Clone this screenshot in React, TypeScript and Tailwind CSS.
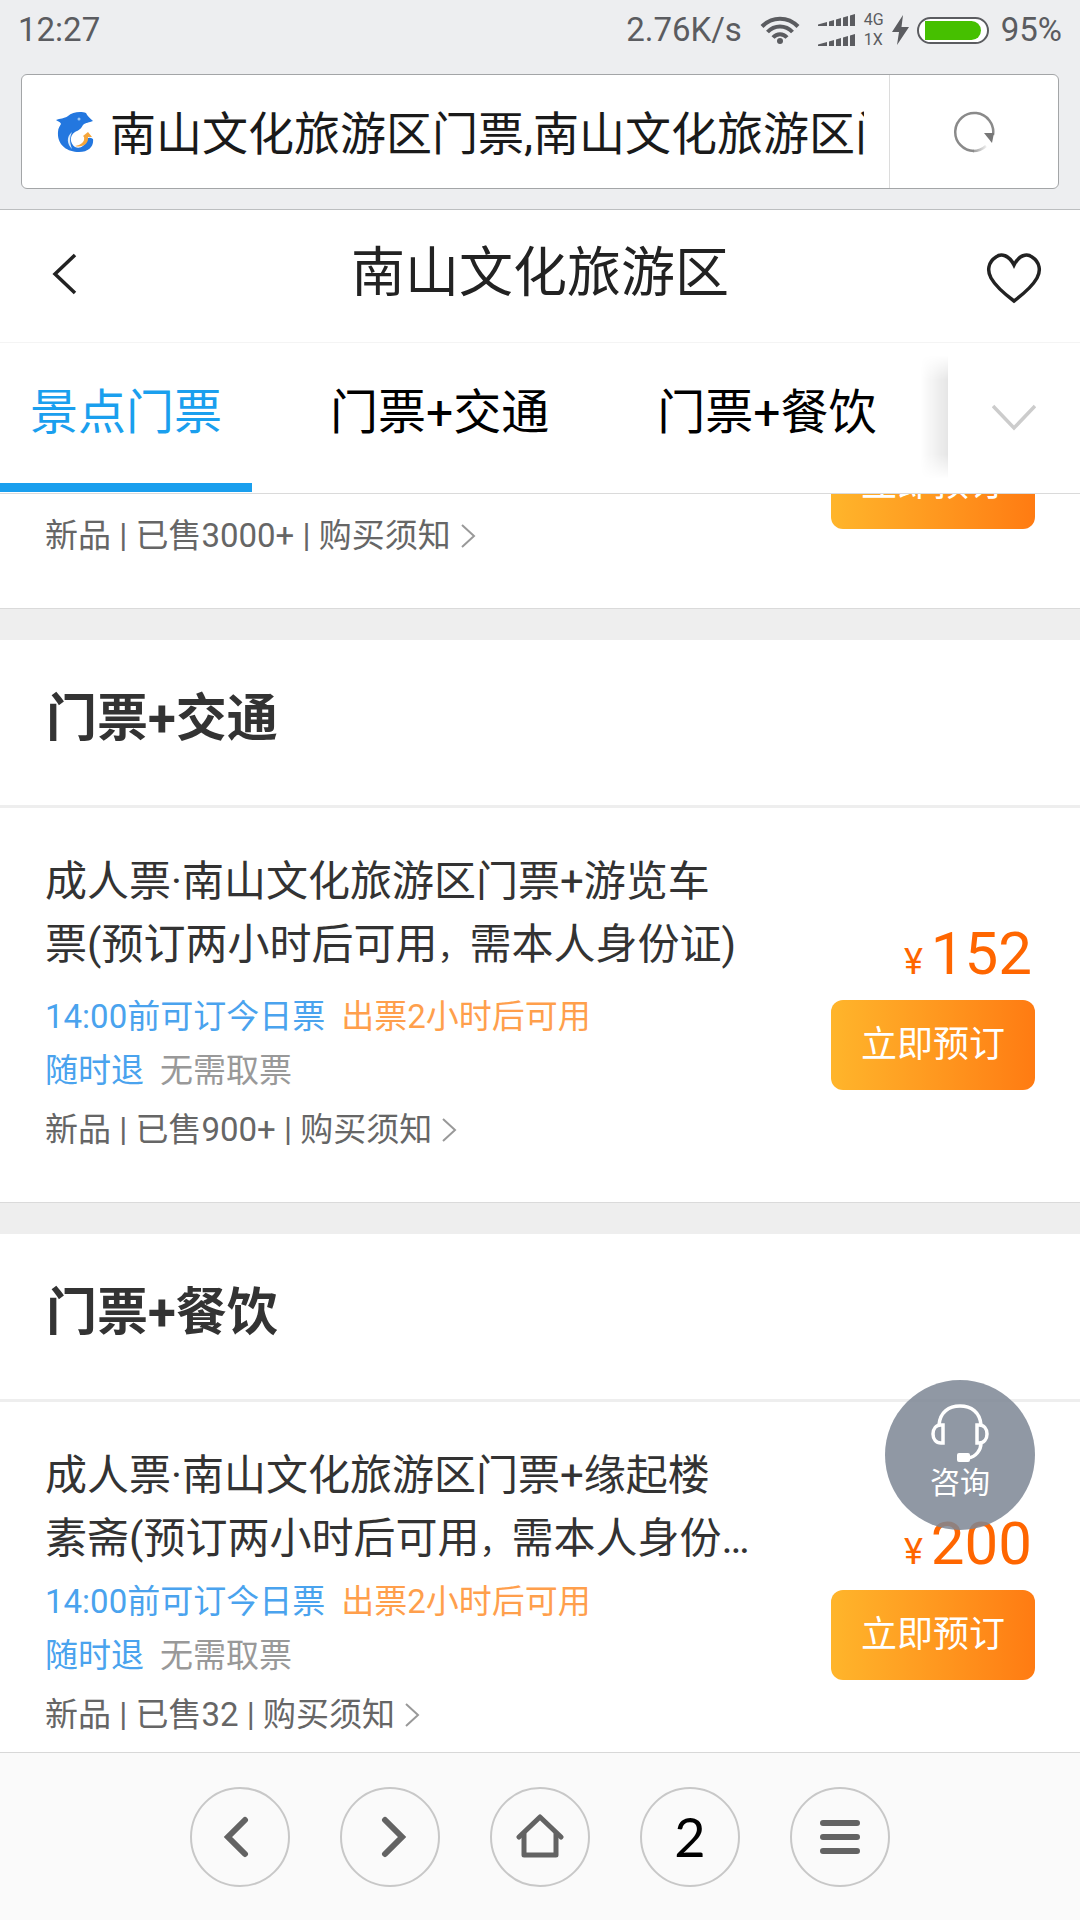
import React from "react";

interface Tag {
  text: string;
  color: string;
}

interface Ticket {
  title: string;
  price: number;
  sold: string;
  compact?: boolean;
}

const BLUE = "text-[#4aa3ee]";
const ORANGE = "text-[#ff9f4c]";

const tagRows: Tag[][] = [
  [
    { text: "14:00前可订今日票", color: BLUE },
    { text: "出票2小时后可用", color: ORANGE },
  ],
  [
    { text: "随时退", color: BLUE },
    { text: "无需取票", color: "text-[#999999]" },
  ],
];

const groups: { name: string; ticket: Ticket }[] = [
  {
    name: "门票+交通",
    ticket: {
      title: "成人票·南山文化旅游区门票+游览车票(预订两小时后可用，需本人身份证)",
      price: 152,
      sold: "900+",
    },
  },
  {
    name: "门票+餐饮",
    ticket: {
      title: "成人票·南山文化旅游区门票+缘起楼素斋(预订两小时后可用，需本人身份…",
      price: 200,
      sold: "32",
      compact: true,
    },
  },
];

const tabs = ["景点门票", "门票+交通", "门票+餐饮"];

const SignalBars = () => (
  <svg width="38" height="12" viewBox="0 0 38 12" fill="currentColor">
    <path d="M0 12V10.5L9 8V12Z" />
    <path d="M11 12V7.5L16 6V12Z" />
    <path d="M18 12V5.5L23 4V12Z" />
    <path d="M25 12V3.5L30 2V12Z" />
    <path d="M32 12V1.5L37 0V12Z" />
  </svg>
);

const StatusBar = () => (
  <div className="flex h-[60px] items-center justify-between px-[18px] text-[33px] leading-[40px] text-[#5b5c60]">
    <span>12:27</span>
    <div className="flex items-center">
      <span>2.76K/s</span>
      <svg className="ml-[18px]" width="40" height="28" viewBox="0 0 40 28" fill="none" stroke="currentColor" strokeWidth="4">
        <path d="M2 10.500C12 0 28 0 38 10.500" />
        <path d="M7.500 16C14.500 8.500 25.500 8.500 32.500 16" />
        <path d="M13 21.500C17 17 23 17 27 21.500" />
        <circle cx="20" cy="25" r="3" fill="currentColor" stroke="none" />
      </svg>
      <div className="ml-[18px] flex flex-col gap-2">
        <SignalBars />
        <SignalBars />
      </div>
      <div className="ml-2 flex flex-col text-[16px] leading-[20px]">
        <span>4G</span>
        <span>1X</span>
      </div>
      <svg className="ml-2" width="17" height="30" viewBox="0 0 17 30" fill="currentColor">
        <path d="M11 0L0 17H7L5 30L17 12H9.500Z" />
      </svg>
      <div className="ml-2 flex h-[27px] w-[72px] items-center rounded-full border-2 border-[#5b5c60] bg-white px-[6px]">
        <div className="h-[19px] w-full rounded-l-[4px] rounded-r-full bg-[#46c000]" />
      </div>
      <span className="ml-3">95%</span>
    </div>
  </div>
);

const DolphinLogo = () => (
  <svg width="38" height="40" viewBox="0 0 38 40">
    <path
      d="M0 8C4 6 8 7 12 4C16 0 25-1 30 1C31 4 34 6 37 9C33 11 30 10 27 13C25 17 23 18 19 20C13 24 14 31 19 35C24 37 29 34 30 29C31 25 34 25 37 27C38 34 33 40 23 40C11 40 1 33 2 20C2 16 4 14 5 12C4 9 2 10 0 8Z"
      fill="#2377df"
    />
    <path d="M16 20C10 25 11 32 16 37C14 31 13 27 16 20Z" fill="#d8e9fb" />
    <path d="M27 24L32 20L36 25L32 25C33 32 26 36 19 34C25 33 29 30 28 25Z" fill="#f5a63c" />
    <circle cx="23" cy="7" r="1.500" fill="#9cc7f5" />
  </svg>
);

const AddressBar = () => (
  <div className="mx-[21px] mb-5 mt-[14px] flex h-[115px] rounded-md border border-[#a3a5a7] bg-white">
    <div className="flex min-w-0 flex-1 items-center border-r border-[#dcdcdc] pl-[34px] pr-[25px]">
      <DolphinLogo />
      <input
        aria-label="地址栏"
        readOnly
        className="ml-4 w-full min-w-0 flex-1 bg-transparent pt-1 text-[46px] leading-[60px] text-[#1a1a1a] outline-none"
        defaultValue="南山文化旅游区门票,南山文化旅游区门票"
      />
    </div>
    <button aria-label="刷新" className="flex w-[168px] items-center justify-center">
      <svg width="42" height="42" viewBox="0 0 42 42" fill="none">
        <defs>
          <linearGradient id="fade" x1="18" y1="0" x2="34" y2="0" gradientUnits="userSpaceOnUse">
            <stop stopColor="#8a8a8a" />
            <stop offset="1" stopColor="#8a8a8a" stopOpacity="0.1" />
          </linearGradient>
        </defs>
        <path d="M21 40A19 19 0 1 1 40 24" stroke="#8a8a8a" strokeWidth="2.500" />
        <path d="M20 40A19 19 0 0 0 33 35" stroke="url(#fade)" strokeWidth="2.500" />
        <path d="M31 22H41L39 32Z" fill="#777777" />
      </svg>
    </button>
  </div>
);

const PageHeader = () => (
  <div className="flex h-[133px] items-center justify-between border-b border-[#f4f4f4] bg-white px-[38px] pb-1">
    <button aria-label="返回" className="w-[57px] pl-3">
      <svg width="28" height="42" viewBox="0 0 28 42" fill="none" stroke="#222222" strokeWidth="3.500">
        <path d="M25 2L5 21L25 40" />
      </svg>
    </button>
    <h1 className="text-[54px] leading-[72px] text-[#222222]">南山文化旅游区</h1>
    <button aria-label="收藏" className="mt-2 flex w-[57px] justify-end">
      <svg width="56" height="52" viewBox="0 0 56 52" fill="none" stroke="#222222" strokeWidth="3.500">
        <path d="M28 13C23 3 15 1 10 5C2 10 1 19 5 26C10 35 20 43 28 49C36 43 46 35 51 26C55 19 54 10 46 5C41 1 33 3 28 13Z" />
      </svg>
    </button>
  </div>
);

const TabBar = () => (
  <div className="flex h-[151px] border-b border-[#dadada] bg-white pb-px">
    <div className="flex min-w-0 flex-1 gap-12 overflow-hidden">
      {tabs.map((tab, i) => (
        <button
          key={tab}
          className={`shrink-0 border-b-9 px-[30px] text-[48px] leading-[64px] ${
            i === 0 ? "border-[#1a9fee] text-[#1a9fee]" : "border-transparent text-black"
          }`}
        >
          {tab}
        </button>
      ))}
    </div>
    <div className="relative flex w-[132px] shrink-0 items-center justify-center">
      <div className="absolute -left-[28px] top-3 h-[124px] w-[28px] bg-linear-to-r from-transparent to-black/10 mask-y-from-80%" />
      <button aria-label="展开">
        <svg width="44" height="28" viewBox="0 0 44 28" fill="none" stroke="#cccccc" strokeWidth="3.500">
          <path d="M1 2L22 24L43 2" />
        </svg>
      </button>
    </div>
  </div>
);

const BookButton = () => (
  <button className="h-[90px] w-[204px] rounded-xl bg-linear-to-r from-[#ffb52b] to-[#ff7b12] text-[36px] leading-[48px] text-white">
    立即预订
  </button>
);

const Meta: React.FC<{ sold: string }> = ({ sold }) => (
  <a href="#notice" className="flex items-center text-[33px] leading-[54px] text-[#666666]">
    新品 | 已售{sold} | 购买须知
    <svg className="ml-[10px]" width="15" height="24" viewBox="0 0 15 24" fill="none" stroke="#999999" strokeWidth="2">
      <path d="M1 1L13 12L1 23" />
    </svg>
  </a>
);

const TicketCard: React.FC<Ticket> = ({ title, price, sold, compact }) => {
  // the full-width comma is set smaller so it takes less room in the line
  const [before, after] = title.split("，");

  return (
    <article className="flex items-center justify-between gap-[80px] border-b border-[#dadada] bg-white px-[45px]">
      <div className="flex-1 pb-[45px] pt-[42px]">
        <h3 className="text-[42px] leading-[63px] text-[#333333]">
          {before}
          <span className="text-[32px] leading-none">，</span>
          {after}
        </h3>
        <div className={compact ? "mt-[5px]" : "mt-[14px]"}>
          {tagRows.map((row, i) => (
            <p key={i} className="flex gap-4 text-[33px] leading-[54px]">
              {row.map((tag) => (
                <span key={tag.text} className={tag.color}>
                  {tag.text}
                </span>
              ))}
            </p>
          ))}
        </div>
        <div className="mt-[5px]">
          <Meta sold={sold} />
        </div>
      </div>
      <div className="shrink-0 pt-1">
        <p className="mb-4 flex items-baseline justify-end gap-2 pr-[3px] text-[#ff6600]">
          <span className="text-[36px] leading-none">¥</span>
          <span className="text-[60px] leading-[60px]">{price}</span>
        </p>
        <BookButton />
      </div>
    </article>
  );
};

const Consult = () => (
  <button className="absolute bottom-[390px] right-[45px] flex h-[150px] w-[150px] flex-col items-center rounded-full bg-[#7c8694]/85 pt-6 text-[30px] leading-[42px] text-white">
    <svg width="58" height="58" viewBox="0 0 58 58" fill="none" stroke="currentColor" strokeWidth="3.500">
      <path d="M8 21C9 8 18 2 29 2C40 2 49 8 50 21" />
      <path d="M12 21V39H10C5 39 2 35 2 30C2 25 5 21 10 21Z" />
      <path d="M46 21V39H48C53 39 56 35 56 30C56 25 53 21 48 21Z" />
      <path d="M50 39C50 46 45 53 37 54" />
      <rect x="26" y="49" width="13" height="9" rx="2" fill="currentColor" stroke="none" />
    </svg>
    咨询
  </button>
);

const NavButton: React.FC<{ label: string; children: React.ReactNode }> = ({ label, children }) => (
  <button
    aria-label={label}
    className="flex h-[100px] w-[100px] items-center justify-center rounded-full border-2 border-[#c8c8c8] font-['Lato',sans-serif] text-[54px] leading-[64px] text-black"
  >
    {children}
  </button>
);

const BottomBar = () => (
  <nav className="flex shrink-0 justify-center gap-[50px] border-t border-[#d8d8d8] bg-[#fafafa] pb-[33px] pt-[34px]">
    <NavButton label="后退">
      <svg className="mr-2" width="28" height="42" viewBox="0 0 28 42" fill="none" stroke="#636363" strokeWidth="6" strokeLinecap="round">
        <path d="M23 4L6 21L23 38" />
      </svg>
    </NavButton>
    <NavButton label="前进">
      <svg className="ml-2" width="28" height="42" viewBox="0 0 28 42" fill="none" stroke="#636363" strokeWidth="6" strokeLinecap="round">
        <path d="M5 4L22 21L5 38" />
      </svg>
    </NavButton>
    <NavButton label="主页">
      <svg width="48" height="46" viewBox="0 0 48 46" fill="none" stroke="#636363" strokeWidth="5" strokeLinecap="round" strokeLinejoin="round">
        <path d="M3 23L24 3L45 23" />
        <path d="M8 20V41H40V20" />
      </svg>
    </NavButton>
    <NavButton label="窗口">2</NavButton>
    <NavButton label="菜单">
      <svg width="40" height="36" viewBox="0 0 40 36" stroke="#636363" strokeWidth="6" strokeLinecap="round">
        <path d="M3 4H37M3 18H37M3 32H37" />
      </svg>
    </NavButton>
  </nav>
);

const App = () => {
  return (
    <div className="relative flex h-screen flex-col overflow-hidden bg-white font-['Roboto','Noto_Sans_CJK_SC',sans-serif]">
      <header className="shrink-0">
        <div className="border-b border-[#bcbec0] bg-[#edeef0]">
          <StatusBar />
          <AddressBar />
        </div>
        <PageHeader />
        <TabBar />
      </header>

      <main className="min-h-0 flex-1 overflow-hidden bg-[#eeeeee]">
        {/* last ticket of the first group, scrolled under the tabs */}
        <article className="-mt-[55px] flex items-end justify-between border-b border-[#dadada] bg-white px-[45px] pb-[45px]">
          <Meta sold="3000+" />
          <div className="pb-[34px]">
            <BookButton />
          </div>
        </article>

        {groups.map((group) => (
          <section key={group.name} className="mt-[31px]">
            <h2 className="border-b-3 border-[#eeeeee] bg-white px-[46px] pb-[52px] pt-11 text-[51px] font-bold leading-[69px] text-[#333333]">
              {group.name}
            </h2>
            <TicketCard {...group.ticket} />
          </section>
        ))}
      </main>

      <BottomBar />
      <Consult />
    </div>
  );
};

export default App;
